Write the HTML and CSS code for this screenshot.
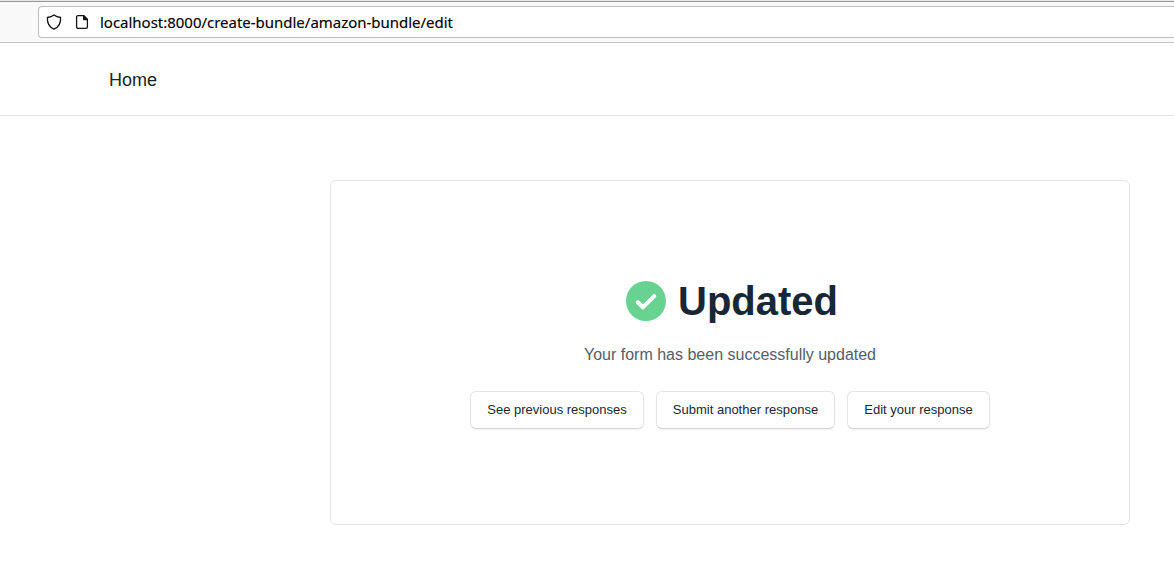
FILE: index.html
```html
<!DOCTYPE html>
<html lang="en">
<head>
<meta charset="utf-8">
<title>Updated</title>
<link rel="stylesheet" href="styles.css">
</head>
<body>
<div class="toolbar">
  <div class="address-bar">
    <svg class="icon" viewBox="0 0 16 16" width="16" height="16"><path d="M8 .9C10 2.4 12.3 3.1 14.6 3.5C14.9 8.8 13.2 13 8 15.2C2.8 13 1.1 8.8 1.4 3.5C3.7 3.1 6 2.4 8 .9Z" fill="none" stroke="#15141a" stroke-width="1.3" stroke-linejoin="round"/></svg>
    <svg class="icon" viewBox="0 0 16 16" width="16" height="16"><path d="M3.4 1.7H9.6L13.4 5.5V12.9Q13.4 14.3 12 14.3H4Q2.6 14.3 2.6 12.9V2.7Q2.6 1.7 3.6 1.7Z" fill="none" stroke="#15141a" stroke-width="1.3"/><path d="M9 1.2H10.2L14 5V6.2H10Q9 6.2 9 5.2Z" fill="#15141a"/></svg>
    <svg class="url" width="360" height="24"><text class="url-text" x="0" y="18" textLength="353" lengthAdjust="spacingAndGlyphs">localhost:8000/create-bundle/amazon-bundle/edit</text></svg>
  </div>
</div>
<header class="site-header"><a class="home">Home</a></header>
<main class="content">
  <section class="card">
    <div class="heading">
      <svg class="check" viewBox="0 0 40 40" width="40" height="40"><circle cx="20" cy="20" r="20" fill="#68d391"/><path d="M11.8 21.3L16.9 26.3L28.2 15.1" fill="none" stroke="#fff" stroke-width="4.1" stroke-linecap="round" stroke-linejoin="round"/></svg>
      <h1 class="title">Updated</h1>
    </div>
    <p class="message">Your form has been successfully updated</p>
    <div class="actions">
      <button class="button see">See previous responses</button>
      <button class="button submit">Submit another response</button>
      <button class="button edit">Edit your response</button>
    </div>
  </section>
</main>
</body>
</html>
```
FILE: styles.css
```css
* { box-sizing: border-box; }
body { margin: 0; height: 572px; overflow: hidden; background: #fff; font-family: "Liberation Sans", Arial, sans-serif; }
.toolbar {
  height: 43px;
  padding: 6px 0 0 38px;
  background: linear-gradient(#e6e6e6 0 1px, #999 1px 2px, #f9f9fa 2px);
  box-shadow: inset 0 -1px #c6c6c6;
}
.address-bar {
  display: flex;
  align-items: center;
  height: 32px;
  padding-left: 7px;
  background: #fff;
  border: 1px solid #bdbdbd;
  border-right: 0;
  border-radius: 4px 0 0 4px;
}
.icon { margin-right: 12px; flex: none; }
.url { margin-left: -2px; flex: none; }
.url-text { font: 400 15px "Noto Sans", sans-serif; fill: #000; stroke: #000; stroke-width: .15px; }
.site-header {
  display: flex;
  align-items: center;
  height: 73px;
  padding: 2px 0 0 109px;
  border-bottom: 1px solid #e2e2e2;
}
.home { font-size: 18px; color: #1a1f24; }
.content { padding: 64px 0 0 330px; }
.card {
  width: 800px;
  height: 345px;
  padding-top: 90px;
  border: 1px solid #e2e4e6;
  border-radius: 6px;
}
.heading { display: flex; align-items: center; gap: 12px; height: 60px; padding-left: 295px; }
.title { margin: 0; font-size: 40px; line-height: 60px; color: #192734; }
.message { margin: 12px 0 0; font-size: 16px; line-height: 24px; text-align: center; color: #535e69; }
.actions { display: flex; gap: 12px; margin-top: 24px; padding-left: 139px; }
.button {
  height: 38px;
  padding: 0 0 2px;
  background: #fff;
  border: 1px solid #e5e5e5;
  border-bottom-color: #d4d6d6;
  border-radius: 6px;
  box-shadow: 0 1px 2px rgba(0, 0, 0, .06);
  font: 13px "Liberation Sans", Arial, sans-serif;
  color: #192734;
}
.see { width: 174px; }
.submit { width: 179px; }
.edit { width: 143px; }
```
